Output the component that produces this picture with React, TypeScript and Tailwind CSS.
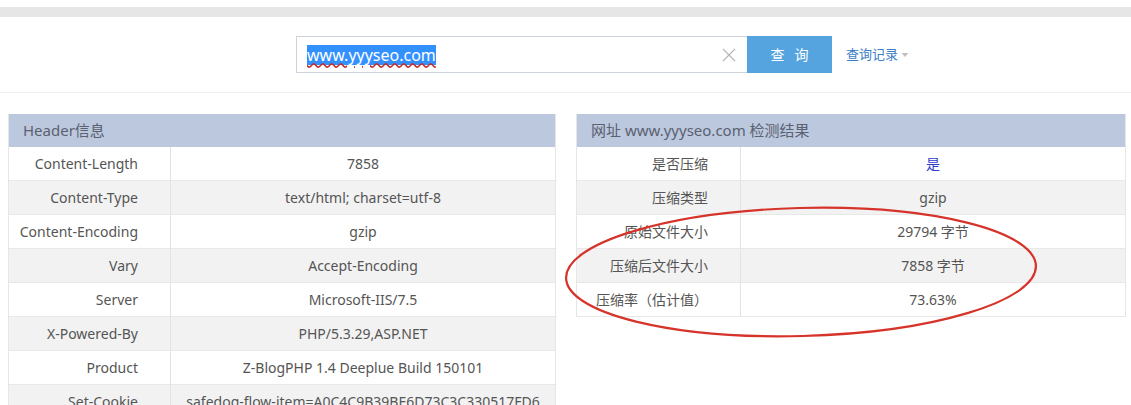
import React from "react";

const font = {
  fontFamily: '"Noto Sans", "Noto Sans CJK SC", sans-serif',
};

const leftRows: [string, string][] = [
  ["Content-Length", "7858"],
  ["Content-Type", "text/html; charset=utf-8"],
  ["Content-Encoding", "gzip"],
  ["Vary", "Accept-Encoding"],
  ["Server", "Microsoft-IIS/7.5"],
  ["X-Powered-By", "PHP/5.3.29,ASP.NET"],
  ["Product", "Z-BlogPHP 1.4 Deeplue Build 150101"],
  ["Set-Cookie", "safedog-flow-item=A0C4C9B39BE6D73C3C330517FD6"],
];

const rightRows: [string, string][] = [
  ["是否压缩", "是"],
  ["压缩类型", "gzip"],
  ["原始文件大小", "29794 字节"],
  ["压缩后文件大小", "7858 字节"],
  ["压缩率（估计值）", "73.63%"],
];

function Table({
  title,
  rows,
  width,
  labelW,
  blueFirst,
}: {
  title: string;
  rows: [string, string][];
  width: string;
  labelW: string;
  blueFirst?: boolean;
}) {
  return (
    <div className={`${width} shrink-0 border-r border-l border-[#e6e6e6]`}>
      <div className="h-[33px] bg-[#bcc8de] flex items-center pl-[14px] text-[15px] text-[#5a6170]">
        {title}
      </div>
      {rows.map(([k, v], i) => (
        <div
          key={k}
          className={`h-[34px] flex border-b border-[#e8e8e8] text-[14px] text-[#555] ${
            i % 2 === 1 ? "bg-[#f2f2f2]" : "bg-white"
          }`}
        >
          <div
            className={`${labelW} shrink-0 border-r border-[#e3e3e3] flex items-center justify-end pr-[32px] whitespace-nowrap`}
          >
            {k}
          </div>
          <div
            className={`flex-1 flex items-center justify-center whitespace-nowrap overflow-hidden ${
              blueFirst && i === 0 ? "text-[#3040c8]" : ""
            }`}
          >
            {v}
          </div>
        </div>
      ))}
    </div>
  );
}

export default function App() {
  return (
    <div className="relative w-[1131px] h-[405px] overflow-hidden bg-white" style={font}>
      <div className="h-[7px] bg-white" />
      <div className="h-[10px] bg-[#e6e6e6]" />
      <div className="h-[76px] border-b border-[#f0f0f0] flex items-start pt-[19px] pl-[296px]">
        <div className="w-[451px] h-[37px] border border-[#cdd3dc] border-r-0 flex items-center pl-[10px] pr-[10px]">
          <span
            className="bg-[#3390ff] text-white text-[16px] leading-[20px] underline decoration-wavy decoration-[#c03030]"
            style={{ textUnderlineOffset: "2px" }}
          >
            www.yyyseo.com
          </span>
          <span className="ml-auto mr-[1px] text-[#b0b0b0]">
            <svg width="14" height="14" viewBox="0 0 14 14">
              <path d="M1 1L13 13M13 1L1 13" stroke="#b5b5b5" strokeWidth="1.1" fill="none" />
            </svg>
          </span>
        </div>
        <div className="w-[85px] h-[37px] bg-[#55a4e0] text-white text-[14px] flex items-center justify-center tracking-[10px] pl-[10px]">
          查询
        </div>
        <div className="h-[37px] flex items-center ml-[14px] text-[13px] text-[#3b7dc7]">
          查询记录
          <svg width="8" height="6" viewBox="0 0 8 6" className="ml-[3px]">
            <path d="M0.5 1L4 5L7.5 1Z" fill="#bfbfbf" />
          </svg>
        </div>
      </div>
      <div className="flex pl-[8px] pt-[21px] gap-[20px]">
        <Table title="Header信息" rows={leftRows} width="w-[548px]" labelW="w-[162px]" />
        <div className="self-start">
          <Table
            title="网址 www.yyyseo.com 检测结果"
            rows={rightRows}
            width="w-[550px]"
            labelW="w-[164px]"
            blueFirst
          />
        </div>
      </div>
      <svg
        className="absolute left-0 top-0 pointer-events-none"
        width="1131"
        height="405"
        viewBox="0 0 1131 405"
      >
        <ellipse
          cx="801"
          cy="272"
          rx="235"
          ry="64"
          transform="rotate(-1.5 801 272)"
          fill="none"
          stroke="#d6332b"
          strokeWidth="2.2"
        />
      </svg>
    </div>
  );
}
